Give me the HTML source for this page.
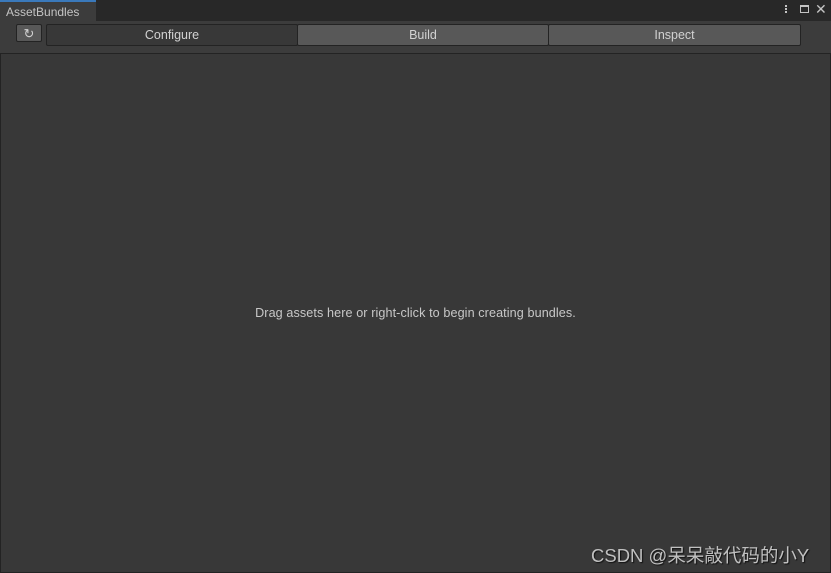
<!DOCTYPE html>
<html><head><style>
body{margin:0;width:831px;height:573px;background:#282828;font-family:"Liberation Sans","Noto Sans CJK SC",sans-serif;overflow:hidden;position:relative}
.abs{position:absolute}
.tab{left:0;top:0;width:96px;height:21px;background:#3c3c3c;border-top:2px solid #3a79bb;box-sizing:border-box;color:#c4c4c4;font-size:12px;line-height:21px;padding-left:6px}
.tool{left:0;top:21px;width:831px;height:32px;background:#3c3c3c}
.btn{top:24px;height:22px;box-sizing:border-box;border:1px solid #232323;color:#d2d2d2;font-size:12.5px;text-align:center;line-height:21px;border-radius:2px}
.content{left:0;top:53px;width:831px;height:520px;background:#383838;border:1px solid #232323;box-sizing:border-box}
</style></head><body>
<div class="abs tab">AssetBundles</div>
<div class="abs" style="left:785px;top:5px;width:2px;height:2px;background:#c4c4c4;box-shadow:0 3px #c4c4c4,0 6px #c4c4c4"></div>
<div class="abs" style="left:800px;top:5px;width:9px;height:8px;border:1px solid #c4c4c4;border-top-width:2px;box-sizing:border-box"></div>
<div class="abs" style="left:815px;top:1px;color:#c4c4c4;font-size:14px">✕</div>
<div class="abs tool"></div>
<div class="abs btn" style="left:16px;width:26px;height:18px;top:24px;background:#585858;line-height:17px;font-size:13px">↻</div>
<div class="abs btn" style="left:46px;width:252px;background:#383838">Configure</div>
<div class="abs btn" style="left:297px;width:252px;background:#585858">Build</div>
<div class="abs btn" style="left:548px;width:253px;background:#585858">Inspect</div>
<div class="abs content"></div>
<div class="abs" style="left:0;width:831px;top:306px;text-align:center;color:#c8c8c8;font-size:12.6px;letter-spacing:0.1px">Drag assets here or right-click to begin creating bundles.</div>
<div class="abs" style="left:591px;top:542px;color:#c0c0c0;font-size:18.5px;text-shadow:1px 1px 1px #111;white-space:nowrap">CSDN @呆呆敲代码的小Y</div>
</body></html>
